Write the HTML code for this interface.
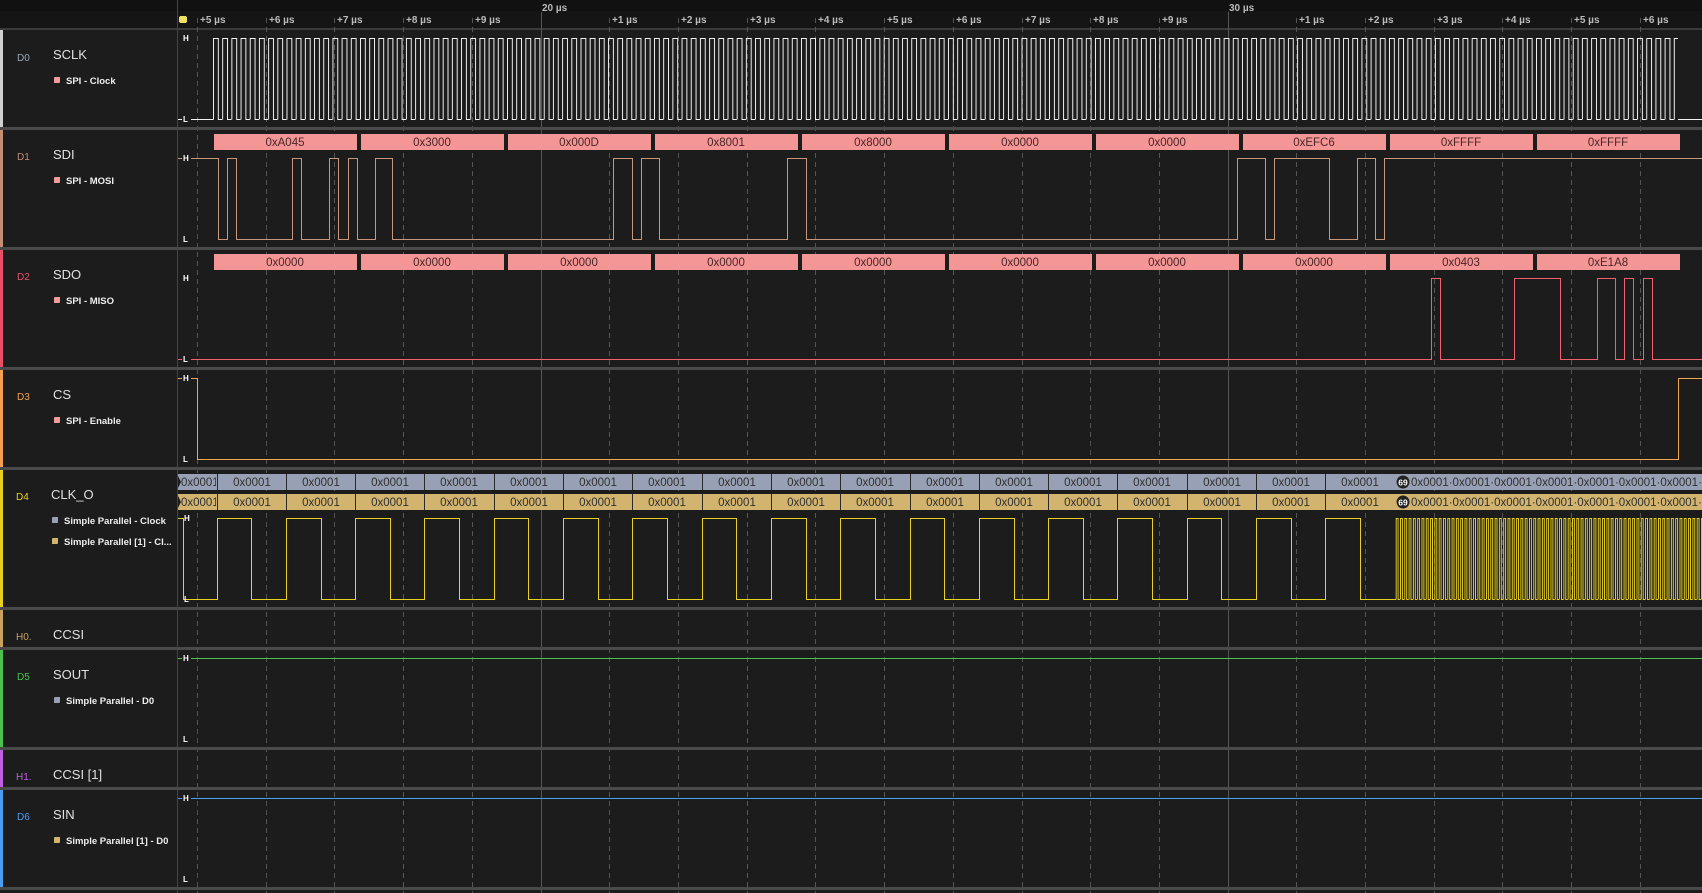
<!DOCTYPE html>
<html><head><meta charset="utf-8"><style>
html,body{margin:0;padding:0;background:#1c1c1c;width:1702px;height:893px;overflow:hidden}
svg{display:block}
text{font-family:"Liberation Sans",sans-serif}
.lbl{font-size:10px}
.nm{font-size:13px;fill:#e0e0e0}
.sub{font-size:9.5px;font-weight:bold;fill:#eee}
.tk{font-size:10px;font-weight:bold;fill:#bbb}
.hl{font-size:8px;font-weight:bold;fill:#fff}
.bx{font-size:11.5px;fill:#4a2626}
.px{font-size:11.5px;fill:#303030}
</style></head><body>
<svg width="1702" height="893" viewBox="0 0 1702 893" shape-rendering="crispEdges">
<defs>
<pattern id="sclk" patternUnits="userSpaceOnUse" x="213" y="0" width="9.1875" height="893">
<path d="M0.5,119.5 V38.5 H5.5 V119.5 H9.19" fill="none" stroke="#f2f2f2" stroke-width="1"/>
</pattern>
<pattern id="fclk" patternUnits="userSpaceOnUse" x="1395.7" y="0" width="4.3" height="893">
<path d="M0.5,599.5 V518.5 H2.6 V599.5 H4.3" fill="none" stroke="#e8d020" stroke-width="1"/>
</pattern>
<clipPath id="sig"><rect x="178" y="0" width="1524" height="893"/></clipPath>
<clipPath id="first"><rect x="178" y="470" width="38" height="45"/></clipPath>
</defs>
<rect width="1702" height="893" fill="#1c1c1c"/>
<rect x="0" y="0" width="1702" height="29" fill="#151515"/>
<rect x="0" y="0" width="1702" height="11" fill="#111"/>
<rect x="0" y="28" width="1702" height="2" fill="#3a3a3a"/>
<rect x="177" y="0" width="1" height="893" fill="#444"/>
<g stroke="#555" stroke-width="1" stroke-dasharray="5,4">
<line x1="197.5" y1="18" x2="197.5" y2="893"/><line x1="266.5" y1="18" x2="266.5" y2="893"/><line x1="334.5" y1="18" x2="334.5" y2="893"/><line x1="403.5" y1="18" x2="403.5" y2="893"/><line x1="472.5" y1="18" x2="472.5" y2="893"/>
<line x1="609.5" y1="18" x2="609.5" y2="893"/><line x1="678.5" y1="18" x2="678.5" y2="893"/><line x1="747.5" y1="18" x2="747.5" y2="893"/><line x1="815.5" y1="18" x2="815.5" y2="893"/><line x1="884.5" y1="18" x2="884.5" y2="893"/><line x1="953.5" y1="18" x2="953.5" y2="893"/><line x1="1022.5" y1="18" x2="1022.5" y2="893"/><line x1="1090.5" y1="18" x2="1090.5" y2="893"/><line x1="1159.5" y1="18" x2="1159.5" y2="893"/>
<line x1="1296.5" y1="18" x2="1296.5" y2="893"/><line x1="1365.5" y1="18" x2="1365.5" y2="893"/><line x1="1434.5" y1="18" x2="1434.5" y2="893"/><line x1="1502.5" y1="18" x2="1502.5" y2="893"/><line x1="1571.5" y1="18" x2="1571.5" y2="893"/><line x1="1640.5" y1="18" x2="1640.5" y2="893"/>
</g>
<g stroke="#555" stroke-width="1">
<line x1="541.5" y1="12" x2="541.5" y2="893"/><line x1="1228.5" y1="12" x2="1228.5" y2="893"/>
</g>
<g class="tk">
<text x="200" y="23">+5 µs</text><text x="269" y="23">+6 µs</text><text x="337" y="23">+7 µs</text><text x="406" y="23">+8 µs</text><text x="475" y="23">+9 µs</text>
<text x="542" y="11">20 µs</text>
<text x="612" y="23">+1 µs</text><text x="681" y="23">+2 µs</text><text x="750" y="23">+3 µs</text><text x="818" y="23">+4 µs</text><text x="887" y="23">+5 µs</text><text x="956" y="23">+6 µs</text><text x="1025" y="23">+7 µs</text><text x="1093" y="23">+8 µs</text><text x="1162" y="23">+9 µs</text>
<text x="1229" y="11">30 µs</text>
<text x="1299" y="23">+1 µs</text><text x="1368" y="23">+2 µs</text><text x="1437" y="23">+3 µs</text><text x="1505" y="23">+4 µs</text><text x="1574" y="23">+5 µs</text><text x="1643" y="23">+6 µs</text>
</g>
<rect x="179" y="16" width="8" height="7" rx="2" fill="#f0e060"/>
<g fill="#4a4a4a">
<rect x="0" y="127" width="1702" height="3"/><rect x="0" y="247" width="1702" height="3"/><rect x="0" y="367" width="1702" height="3"/><rect x="0" y="467" width="1702" height="3"/><rect x="0" y="607" width="1702" height="3"/><rect x="0" y="647" width="1702" height="3"/><rect x="0" y="747" width="1702" height="3"/><rect x="0" y="787" width="1702" height="3"/><rect x="0" y="887" width="1702" height="3"/>
</g>
<rect x="0" y="30" width="3" height="97" fill="#d0d0d0"/>
<rect x="0" y="130" width="3" height="117" fill="#c48e72"/>
<rect x="0" y="250" width="3" height="117" fill="#e8506a"/>
<rect x="0" y="370" width="3" height="97" fill="#f0a050"/>
<rect x="0" y="470" width="3" height="137" fill="#e8d020"/>
<rect x="0" y="610" width="3" height="37" fill="#c8a060"/>
<rect x="0" y="650" width="3" height="97" fill="#4cc050"/>
<rect x="0" y="750" width="3" height="37" fill="#c060e0"/>
<rect x="0" y="790" width="3" height="97" fill="#4a9ef0"/>
<text class="lbl" x="17" y="61" fill="#9ab">D0</text><text class="nm" x="53" y="59">SCLK</text>
<rect x="54" y="77" width="6" height="6" rx="1" fill="#f59a9a"/><text class="sub" x="66" y="84">SPI - Clock</text>
<text class="lbl" x="17" y="160" fill="#c48e72">D1</text><text class="nm" x="53" y="159">SDI</text>
<rect x="54" y="177" width="6" height="6" rx="1" fill="#f59a9a"/><text class="sub" x="66" y="184">SPI - MOSI</text>
<text class="lbl" x="17" y="280" fill="#e8506a">D2</text><text class="nm" x="53" y="279">SDO</text>
<rect x="54" y="297" width="6" height="6" rx="1" fill="#f59a9a"/><text class="sub" x="66" y="304">SPI - MISO</text>
<text class="lbl" x="17" y="400" fill="#f0a050">D3</text><text class="nm" x="53" y="399">CS</text>
<rect x="54" y="417" width="6" height="6" rx="1" fill="#f59a9a"/><text class="sub" x="66" y="424">SPI - Enable</text>
<text class="lbl" x="16" y="500" fill="#e8d020">D4</text><text class="nm" x="51" y="499">CLK_O</text>
<rect x="52" y="517" width="6" height="6" rx="1" fill="#97a0b4"/><text class="sub" x="64" y="524">Simple Parallel - Clock</text>
<rect x="52" y="538" width="6" height="6" rx="1" fill="#d2b46e"/><text class="sub" x="64" y="545">Simple Parallel [1] - Cl...</text>
<text class="lbl" x="16" y="640" fill="#c8a060">H0.</text><text class="nm" x="53" y="639">CCSI</text>
<text class="lbl" x="17" y="680" fill="#4cc050">D5</text><text class="nm" x="53" y="679">SOUT</text>
<rect x="54" y="697" width="6" height="6" rx="1" fill="#97a0b4"/><text class="sub" x="66" y="704">Simple Parallel - D0</text>
<text class="lbl" x="16" y="780" fill="#c060e0">H1.</text><text class="nm" x="53" y="779">CCSI [1]</text>
<text class="lbl" x="17" y="820" fill="#4a9ef0">D6</text><text class="nm" x="53" y="819">SIN</text>
<rect x="54" y="837" width="6" height="6" rx="1" fill="#d2b46e"/><text class="sub" x="66" y="844">Simple Parallel [1] - D0</text>

<g clip-path="url(#sig)">
<rect x="213" y="30" width="1465" height="95" fill="url(#sclk)"/>
<path d="M177,119.5 H213.5 M1678,119.5 H1702" stroke="#f2f2f2" fill="none"/>
<g fill="#f59696">
<rect x="214" y="134" width="143" height="16"/><rect x="361" y="134" width="143" height="16"/><rect x="508" y="134" width="143" height="16"/><rect x="655" y="134" width="143" height="16"/><rect x="802" y="134" width="143" height="16"/><rect x="949" y="134" width="143" height="16"/><rect x="1096" y="134" width="143" height="16"/><rect x="1243" y="134" width="143" height="16"/><rect x="1390" y="134" width="143" height="16"/><rect x="1537" y="134" width="143" height="16"/>
<rect x="214" y="254" width="143" height="16"/><rect x="361" y="254" width="143" height="16"/><rect x="508" y="254" width="143" height="16"/><rect x="655" y="254" width="143" height="16"/><rect x="802" y="254" width="143" height="16"/><rect x="949" y="254" width="143" height="16"/><rect x="1096" y="254" width="143" height="16"/><rect x="1243" y="254" width="143" height="16"/><rect x="1390" y="254" width="143" height="16"/><rect x="1537" y="254" width="143" height="16"/>
</g>
<g class="bx" text-anchor="middle">
<text x="285" y="146">0xA045</text><text x="432" y="146">0x3000</text><text x="579" y="146">0x000D</text><text x="726" y="146">0x8001</text><text x="873" y="146">0x8000</text><text x="1020" y="146">0x0000</text><text x="1167" y="146">0x0000</text><text x="1314" y="146">0xEFC6</text><text x="1461" y="146">0xFFFF</text><text x="1608" y="146">0xFFFF</text>
<text x="285" y="266">0x0000</text><text x="432" y="266">0x0000</text><text x="579" y="266">0x0000</text><text x="726" y="266">0x0000</text><text x="873" y="266">0x0000</text><text x="1020" y="266">0x0000</text><text x="1167" y="266">0x0000</text><text x="1314" y="266">0x0000</text><text x="1461" y="266">0x0403</text><text x="1608" y="266">0xE1A8</text>
</g>
<path d="M177,158.5 H218.5 V239.5 H227.5 V158.5 H236.5 V239.5 H292.5 V158.5 H301.5 V239.5 H329.5 V158.5 H338.5 V239.5 H348.5 V158.5 H357.5 V239.5 H375.5 V158.5 H392.5 V239.5 H613.5 V158.5 H632.5 V239.5 H641.5 V158.5 H659.5 V239.5 H787.5 V158.5 H806.5 V239.5 H1237.5 V158.5 H1265.5 V239.5 H1274.5 V158.5 H1329.5 V239.5 H1357.5 V158.5 H1375.5 V239.5 H1384.5 V158.5 H1702" stroke="#c8967a" fill="none"/>
<path d="M177,359.5 H1431.5 V278.5 H1440.5 V359.5 H1514.5 V278.5 H1560.5 V359.5 H1597.5 V278.5 H1615.5 V359.5 H1624.5 V278.5 H1633.5 V359.5 H1643.5 V278.5 H1652.5 V359.5 H1702" stroke="#f0606e" fill="none"/>
<path d="M177,378.5 H197.5 V459.5 H1678.5 V378.5 H1702" stroke="#f0a850" fill="none"/>
<rect x="177" y="474" width="1525" height="16" fill="#97a0b4"/>
<rect x="177" y="494" width="1525" height="16" fill="#d2b46e"/>
<path d="M177,474 L181,482 L177,490Z M177,494 L181,502 L177,510Z" fill="#1c1c1c"/>
<g stroke="#2a2a2a" stroke-width="1">
<path d="M217.5,474V490M286.5,474V490M355.5,474V490M424.5,474V490M494.5,474V490M563.5,474V490M632.5,474V490M702.5,474V490M771.5,474V490M840.5,474V490M910.5,474V490M979.5,474V490M1048.5,474V490M1117.5,474V490M1187.5,474V490M1256.5,474V490M1325.5,474V490"/>
<path d="M217.5,494V510M286.5,494V510M355.5,494V510M424.5,494V510M494.5,494V510M563.5,494V510M632.5,494V510M702.5,494V510M771.5,494V510M840.5,494V510M910.5,494V510M979.5,494V510M1048.5,494V510M1117.5,494V510M1187.5,494V510M1256.5,494V510M1325.5,494V510"/>
</g>
<g class="px" text-anchor="middle">
<text x="252" y="486">0x0001</text><text x="321" y="486">0x0001</text><text x="390" y="486">0x0001</text><text x="459" y="486">0x0001</text><text x="529" y="486">0x0001</text><text x="598" y="486">0x0001</text><text x="667" y="486">0x0001</text><text x="737" y="486">0x0001</text><text x="806" y="486">0x0001</text><text x="875" y="486">0x0001</text><text x="945" y="486">0x0001</text><text x="1014" y="486">0x0001</text><text x="1083" y="486">0x0001</text><text x="1152" y="486">0x0001</text><text x="1222" y="486">0x0001</text><text x="1291" y="486">0x0001</text><text x="1360" y="486">0x0001</text>
<text x="252" y="506">0x0001</text><text x="321" y="506">0x0001</text><text x="390" y="506">0x0001</text><text x="459" y="506">0x0001</text><text x="529" y="506">0x0001</text><text x="598" y="506">0x0001</text><text x="667" y="506">0x0001</text><text x="737" y="506">0x0001</text><text x="806" y="506">0x0001</text><text x="875" y="506">0x0001</text><text x="945" y="506">0x0001</text><text x="1014" y="506">0x0001</text><text x="1083" y="506">0x0001</text><text x="1152" y="506">0x0001</text><text x="1222" y="506">0x0001</text><text x="1291" y="506">0x0001</text><text x="1360" y="506">0x0001</text>
</g>
<g clip-path="url(#first)">
<text class="px" x="181" y="486">0x0001</text><text class="px" x="181" y="506">0x0001</text>
</g>
<circle cx="1403" cy="482" r="6.5" fill="#222" shape-rendering="auto"/><circle cx="1403" cy="502" r="6.5" fill="#222" shape-rendering="auto"/>
<text x="1403" y="485.5" font-size="8.5" font-weight="bold" fill="#fff" text-anchor="middle">69</text>
<text x="1403" y="505.5" font-size="8.5" font-weight="bold" fill="#fff" text-anchor="middle">69</text>
<text class="px" x="1411" y="486">0x0001·0x0001·0x0001·0x0001·0x0001·0x0001·0x0001·0x0001</text>
<text class="px" x="1411" y="506">0x0001·0x0001·0x0001·0x0001·0x0001·0x0001·0x0001·0x0001</text>
<path d="M177,518.5 H183.5 V599.5 H217.5 V518.5 H251.5 V599.5 H286.5 V518.5 H321.5 V599.5 H355.5 V518.5 H390.5 V599.5 H424.5 V518.5 H459.5 V599.5 H494.5 V518.5 H528.5 V599.5 H563.5 V518.5 H598.5 V599.5 H632.5 V518.5 H667.5 V599.5 H702.5 V518.5 H736.5 V599.5 H771.5 V518.5 H806.5 V599.5 H840.5 V518.5 H875.5 V599.5 H910.5 V518.5 H944.5 V599.5 H979.5 V518.5 H1014.5 V599.5 H1048.5 V518.5 H1083.5 V599.5 H1117.5 V518.5 H1152.5 V599.5 H1187.5 V518.5 H1221.5 V599.5 H1256.5 V518.5 H1291.5 V599.5 H1325.5 V518.5 H1360.5 V599.5 H1396" stroke="#e8d020" fill="none"/>
<rect x="1395.7" y="515" width="307" height="90" fill="url(#fclk)"/>
<line x1="177" y1="658.5" x2="1702" y2="658.5" stroke="#4cc050"/>
<line x1="177" y1="798.5" x2="1702" y2="798.5" stroke="#4a9ef0"/>
</g>
<g class="hl">
<rect x="182" y="33" width="9" height="10" fill="#1c1c1c"/><text x="183" y="41">H</text><rect x="182" y="114" width="9" height="10" fill="#1c1c1c"/><text x="183" y="122">L</text>
<rect x="182" y="154" width="9" height="10" fill="#1c1c1c"/><text x="183" y="161">H</text><rect x="182" y="234" width="9" height="10" fill="#1c1c1c"/><text x="183" y="242">L</text>
<text x="183" y="281">H</text><rect x="182" y="355" width="9" height="9" fill="#1c1c1c"/><text x="183" y="362">L</text>
<rect x="182" y="374" width="9" height="9" fill="#1c1c1c"/><text x="183" y="381">H</text><rect x="182" y="455" width="9" height="9" fill="#1c1c1c"/><text x="183" y="462">L</text>
<text x="184" y="521">H</text><text x="184" y="602">L</text>
<rect x="182" y="654" width="9" height="9" fill="#1c1c1c"/><text x="183" y="661">H</text><text x="183" y="742">L</text>
<rect x="182" y="794" width="9" height="9" fill="#1c1c1c"/><text x="183" y="801">H</text><text x="183" y="882">L</text>
</g>
</svg>
</body></html>
